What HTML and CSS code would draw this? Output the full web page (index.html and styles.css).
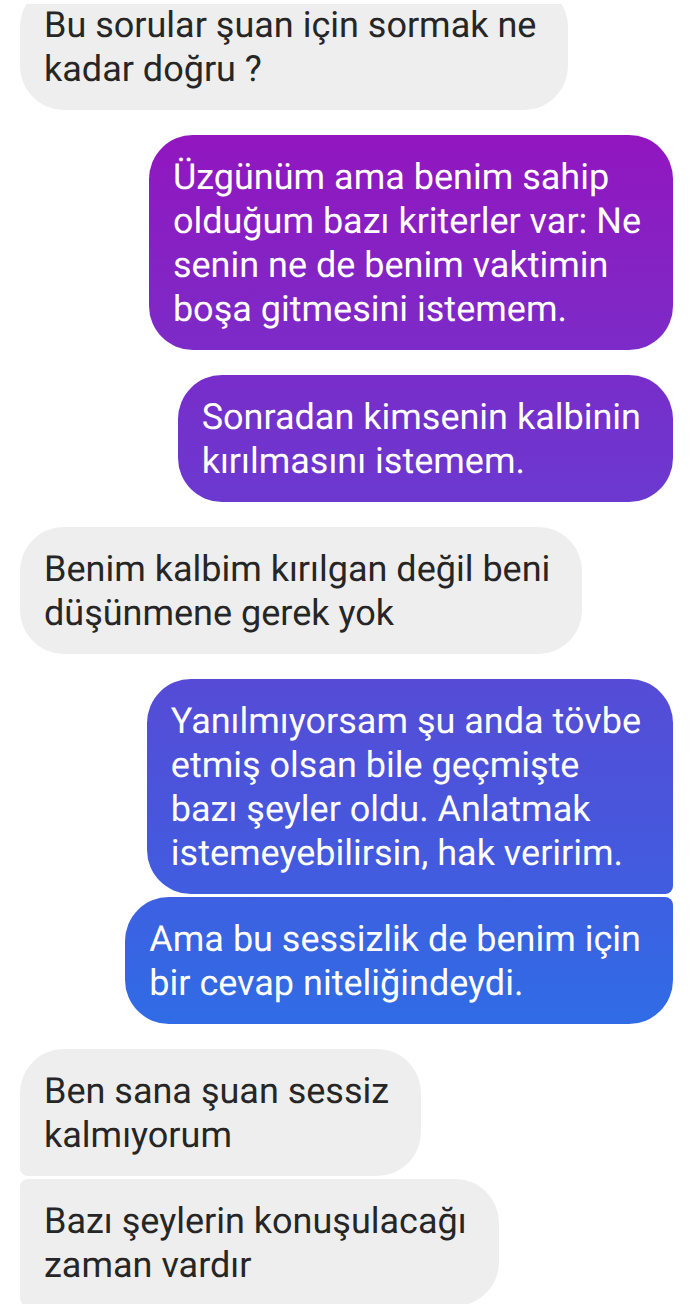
FILE: index.html
```html
<!DOCTYPE html>
<html lang="tr">
<head>
    <meta charset="UTF-8">
    <meta name="viewport" content="width=device-width, initial-scale=1.0">
    <title>Mesajlar</title>
    <link rel="stylesheet" href="styles.css">
</head>
<body>
    <main class="chat">
        <div class="group received">
            <p class="bubble">Bu sorular şuan için sormak ne<br>kadar doğru ?</p>
        </div>
        <div class="group sent">
            <p class="bubble purple">Üzgünüm ama benim sahip<br>olduğum bazı kriterler var: Ne<br>senin ne de benim vaktimin<br>boşa gitmesini istemem.</p>
        </div>
        <div class="group sent">
            <p class="bubble violet">Sonradan kimsenin kalbinin<br>kırılmasını istemem.</p>
        </div>
        <div class="group received">
            <p class="bubble">Benim kalbim kırılgan değil beni<br>düşünmene gerek yok</p>
        </div>
        <div class="group sent">
            <p class="bubble indigo first">Yanılmıyorsam şu anda tövbe<br>etmiş olsan bile geçmişte<br>bazı şeyler oldu. Anlatmak<br>istemeyebilirsin, hak veririm.</p>
            <p class="bubble blue last">Ama bu sessizlik de benim için<br>bir cevap niteliğindeydi.</p>
        </div>
        <div class="group received">
            <p class="bubble first">Ben sana şuan sessiz<br>kalmıyorum</p>
            <p class="bubble middle">Bazı şeylerin konuşulacağı<br>zaman vardır</p>
        </div>
    </main>
</body>
</html>
```
FILE: styles.css
```css
* {
    box-sizing: border-box;
}
body {
    font-family: Roboto, Arial, sans-serif;
    text-rendering: geometricPrecision;
    background-color: #ffffff;
    margin: 0;
    padding-top: 4px;
    height: 100vh;
}
.chat {
    display: flex;
    flex-direction: column;
    gap: 25px;
    height: 100%;
    padding: 0 17px 0 20px;
    overflow: hidden;
}
.group {
    display: flex;
    flex-direction: column;
    flex-shrink: 0;
    gap: 3px;
}
/* the oldest message is partly scrolled out of view */
.group:first-child {
    margin-top: -21px;
}
.received {
    align-items: flex-start;
}
.sent {
    align-items: flex-end;
}
.bubble {
    margin: 0;
    padding: 20px 32px 19px 24px;
    border-radius: 44px;
    font-size: 36px;
    line-height: 44px;
}
.received .bubble {
    background-color: #eeeeee;
    color: #262626;
}
.sent .bubble {
    color: #ffffff;
}
.sent .purple {
    background: linear-gradient(#9216bf, #7c2bc8);
}
.sent .violet {
    background: linear-gradient(#782dca, #6b39d0);
}
.sent .indigo {
    background: linear-gradient(#564bd6, #405de0);
}
.sent .blue {
    background: linear-gradient(#3d60e1, #306ce5);
}
.sent .first {
    border-bottom-right-radius: 8px;
}
.sent .last {
    border-top-right-radius: 8px;
}
.received .first {
    border-bottom-left-radius: 8px;
}
.received .middle {
    border-top-left-radius: 8px;
    border-bottom-left-radius: 8px;
}
```
